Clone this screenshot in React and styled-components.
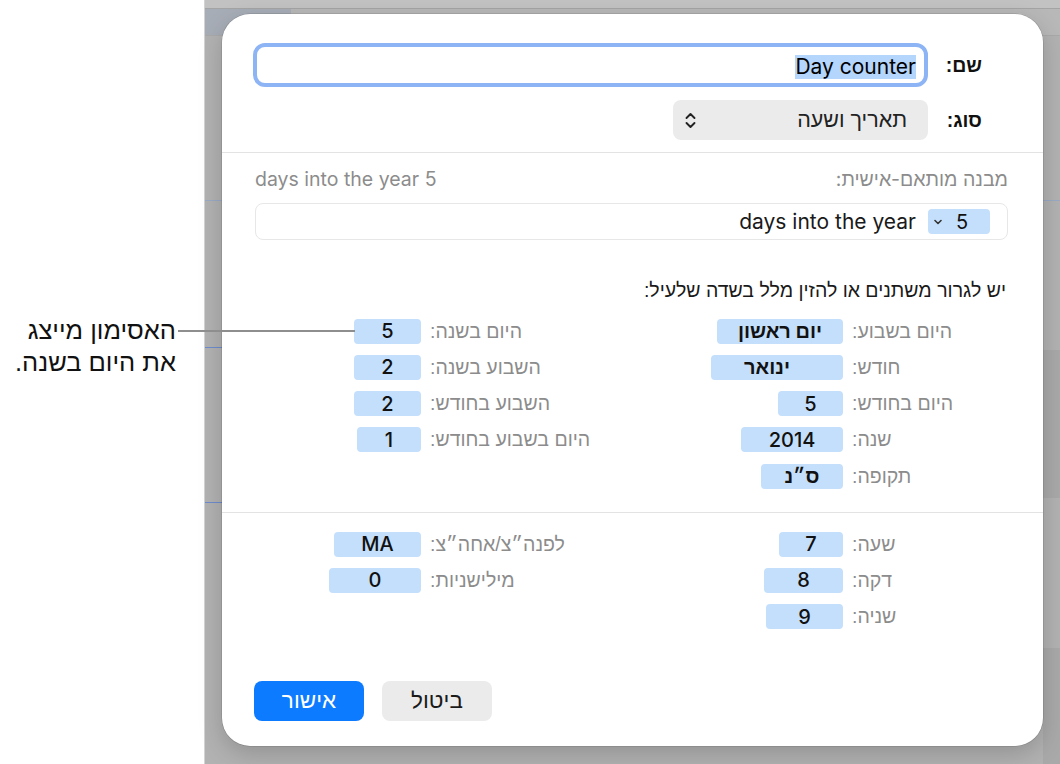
import React from "react";
import styled, { createGlobalStyle } from "styled-components";

const Global = createGlobalStyle`
  html, body { margin: 0; padding: 0; background: #fff; }
  body { font-family: "Inter", "Liberation Sans", Arial, sans-serif; }
  #root { width: 1060px; height: 764px; }
`;

const Page = styled.div`
  position: relative;
  display: flex;
  width: 1060px;
  height: 764px;
  overflow: hidden;
`;

const Annotation = styled.div`
  flex: none;
  width: 204px;
  box-sizing: border-box;
  padding: 314px 28px 0 0;
  direction: rtl;
  font-family: "Liberation Sans", Arial, sans-serif;
  font-size: 25.5px;
  line-height: 32px;
  color: #111;
`;

const Callout = styled.div`
  position: absolute;
  left: 178px;
  top: 330px;
  width: 177px;
  height: 2px;
  background: #8e8e8e;
`;

const Backdrop = styled.div`
  flex: 1;
  box-sizing: border-box;
  padding: 14px 17px 18px 17px;
  border-left: 1px solid #d3d3d3;
  background:
    linear-gradient(#c2c2c2, #c2c2c2) 0 0 / 100% 8px no-repeat,
    linear-gradient(#a4a4a4, #a4a4a4) 0 8px / 100% 1px no-repeat,
    linear-gradient(#a7adb6, #a7adb6) 0 9px / 86px 26px no-repeat,
    linear-gradient(#b8b8b8, #b8b8b8) 0 9px / 100% 26px no-repeat,
    linear-gradient(#a9a9a9, #a9a9a9) 0 35px / 100% 1px no-repeat,
    linear-gradient(#6e8ccc, #6e8ccc) 0 347px / 18px 1px no-repeat,
    linear-gradient(#6e8ccc, #6e8ccc) 0 502px / 18px 1px no-repeat,
    linear-gradient(#9aaac4, #9aaac4) 0 200px / 100% 1px no-repeat,
    linear-gradient(#a9a9a9, #a9a9a9) 100% 350px / 17px 148px no-repeat,
    linear-gradient(#a9a9a9, #a9a9a9) 100% 648px / 17px 116px no-repeat,
    #b2b2b2;
`;

const Dialog = styled.div`
  height: 100%;
  box-sizing: border-box;
  background: #fff;
  border-radius: 28px;
  box-shadow: 0 0 0 0.5px rgba(0, 0, 0, 0.18), 0 8px 24px rgba(0, 0, 0, 0.18);
  direction: rtl;
  display: flex;
  flex-direction: column;
  color: #1a1a1a;
  font-size: 19px;
`;

const Header = styled.div`
  display: grid;
  grid-template-columns: 38px 1fr;
  column-gap: 16px;
  row-gap: 13px;
  align-items: center;
  padding: 29px 61px 12px 31px;
`;

const FormLabel = styled.div`
  font-family: "Liberation Sans", Arial, sans-serif;
  font-weight: 700;
  font-size: 19.5px;
  color: #111;
`;

const NameInput = styled.div`
  height: 44px;
  box-sizing: border-box;
  border: 4px solid #8db4f4;
  border-radius: 12px;
  display: flex;
  align-items: center;
  padding: 3px 8px 0 0;
`;

const Selected = styled.span`
  direction: ltr;
  background: #b4d5fc;
  font-size: 21px;
  line-height: 24px;
  color: #000;
`;

const Select = styled.div`
  justify-self: start;
  width: 255px;
  height: 40px;
  box-sizing: border-box;
  background: #ebebeb;
  border-radius: 8px;
  display: flex;
  align-items: center;
  justify-content: space-between;
  padding: 0 21px 0 12px;
  font-family: "Liberation Sans", Arial, sans-serif;
  font-size: 21.5px;
  color: #222;
`;

const Divider = styled.div`
  height: 1px;
  background: #e3e3e3;
  flex: none;
`;

const FormatSection = styled.div`
  padding: 15px 35px 0 33px;
`;

const GrayRow = styled.div`
  display: flex;
  justify-content: space-between;
  align-items: center;
  height: 22px;
  color: #8c8c8c;
  font-size: 19.5px;
`;

const Ltr = styled.span`
  direction: ltr;
  unicode-bidi: isolate;
`;

const FormatField = styled.div`
  margin-top: 13px;
  height: 37px;
  box-sizing: border-box;
  border: 1px solid #e7e7e7;
  border-radius: 8px;
  display: flex;
  align-items: center;
  gap: 12px;
  padding-right: 17px;
  font-size: 21px;
  color: #1a1a1a;
`;

const ChipToken = styled.span`
  direction: ltr;
  display: inline-flex;
  align-items: center;
  gap: 14px;
  width: 62px;
  height: 25px;
  box-sizing: border-box;
  padding-left: 6px;
  background: #c4dffb;
  border-radius: 4px;
  font-size: 20px;
  color: #111;
`;

const Instruction = styled.div`
  margin-top: 38px;
  line-height: 24px;
  font-family: "Liberation Sans", Arial, sans-serif;
  font-size: 19.5px;
  color: #1a1a1a;
  padding-right: 2px;
`;

const Fields = styled.div`
  display: flex;
  gap: 93px;
  padding-right: ${(p) => p.$right}px;
  margin-top: ${(p) => p.$top}px;
  padding-bottom: ${(p) => p.$bottom}px;
`;

const FieldGroup = styled.div`
  display: grid;
  grid-template-columns: ${(p) => p.$label}px ${(p) => p.$token}px;
  grid-auto-rows: 25px;
  row-gap: 11.25px;
  column-gap: 9px;
  align-items: center;
`;

const FieldLabel = styled.span`
  justify-self: end;
  font-family: "Liberation Sans", Arial, sans-serif;
  font-size: 19.5px;
  color: #8c8c8c;
  white-space: nowrap;
`;

const Token = styled.span`
  justify-self: start;
  display: inline-flex;
  align-items: center;
  justify-content: center;
  box-sizing: border-box;
  width: ${(p) => p.$w}px;
  height: 25px;
  padding-inline-start: ${(p) => p.$shift || 0}px;
  background: #c4dffb;
  border-radius: 4px;
  font-family: "Inter", "Liberation Sans", Arial, sans-serif;
  font-weight: ${(p) => (p.$bold ? 700 : 500)};
  font-size: 20px;
  color: #111;
`;

const Footer = styled.div`
  margin-top: auto;
  display: flex;
  justify-content: flex-end;
  gap: 18px;
  padding: 0 0 25px 32px;
`;

const Button = styled.button`
  width: 110px;
  height: 40px;
  border: none;
  border-radius: 8px;
  font-family: "Liberation Sans", Arial, sans-serif;
  font-size: 22.5px;
  background: ${(p) => (p.$primary ? "#0c7bff" : "#ebebeb")};
  color: ${(p) => (p.$primary ? "#fff" : "#1a1a1a")};
  padding: 0;
`;

const UpDown = () => (
  <svg width="11" height="17" viewBox="0 0 11 17" fill="none" stroke="#222" strokeWidth="1.9" strokeLinecap="round" strokeLinejoin="round">
    <path d="M1.5 6 L5.5 2 L9.5 6" />
    <path d="M1.5 11 L5.5 15 L9.5 11" />
  </svg>
);

const SmallChevron = () => (
  <svg width="8" height="6" viewBox="0 0 8 6" fill="none" stroke="#333" strokeWidth="1.6" strokeLinecap="round" strokeLinejoin="round">
    <path d="M1 1.5 L4 4.5 L7 1.5" />
  </svg>
);

const dateRight = [
  ["היום בשבוע:", "יום ראשון", 126, 0, true],
  ["חודש:", "ינואר", 132, 20, true],
  ["היום בחודש:", "5", 65, 0],
  ["שנה:", "2014", 102, 0],
  ["תקופה:", "ס״נ", 82, 0, true],
];
const dateLeft = [
  ["היום בשנה:", "5", 67],
  ["השבוע בשנה:", "2", 67],
  ["השבוע בחודש:", "2", 67],
  ["היום בשבוע בחודש:", "1", 64],
];
const timeRight = [
  ["שעה:", "7", 64],
  ["דקה:", "8", 79],
  ["שניה:", "9", 77],
];
const timeLeft = [
  ["לפנה״צ/אחה״צ:", "MA", 87],
  ["מילישניות:", "0", 92],
];

const Group = ({ rows, label, token }) => (
  <FieldGroup $label={label} $token={token}>
    {rows.map(([l, v, w, s, b]) => (
      <React.Fragment key={l}>
        <FieldLabel>{l}</FieldLabel>
        <Token $w={w} $shift={s} $bold={b}>{v}</Token>
      </React.Fragment>
    ))}
  </FieldGroup>
);

export default function App() {
  return (
    <Page>
      <Global />
      <Annotation>
        האסימון מייצג
        <br />
        את היום בשנה.
      </Annotation>
      <Backdrop>
        <Dialog>
          <Header>
            <FormLabel>שם:</FormLabel>
            <NameInput>
              <Selected>Day counter</Selected>
            </NameInput>
            <FormLabel>סוג:</FormLabel>
            <Select>
              <span>תאריך ושעה</span>
              <UpDown />
            </Select>
          </Header>
          <Divider />
          <FormatSection>
            <GrayRow>
              <span>מבנה מותאם-אישית:</span>
              <Ltr>days into the year 5</Ltr>
            </GrayRow>
            <FormatField>
              <ChipToken>
                <SmallChevron />
                <span>5</span>
              </ChipToken>
              <Ltr>days into the year</Ltr>
            </FormatField>
            <Instruction>יש לגרור משתנים או להזין מלל בשדה שלעיל:</Instruction>
          </FormatSection>
          <Fields $right={81} $top={16.5} $bottom={23.5}>
            <Group rows={dateRight} label={110} token={150} />
            <Group rows={dateLeft} label={170} token={112} />
          </Fields>
          <Divider />
          <Fields $right={81} $top={18.5} $bottom={0}>
            <Group rows={timeRight} label={110} token={150} />
            <Group rows={timeLeft} label={170} token={112} />
          </Fields>
          <Footer>
            <Button>ביטול</Button>
            <Button $primary>אישור</Button>
          </Footer>
        </Dialog>
      </Backdrop>
      <Callout />
    </Page>
  );
}
